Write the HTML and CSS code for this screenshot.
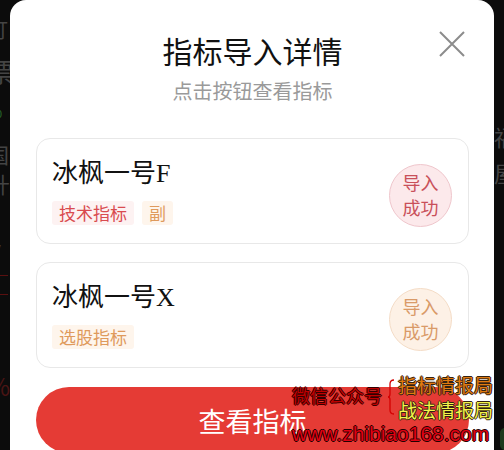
FILE: index.html
```html
<!DOCTYPE html>
<html lang="zh-CN">
<head>
    <meta charset="UTF-8">
    <meta name="viewport" content="width=device-width, initial-scale=1.0">
    <title>指标导入详情</title>
    <link rel="stylesheet" href="styles.css">
</head>
<body>
    <div class="screen">
        <div class="side side-left">
            <span class="ghost g-ding">订</span>
            <span class="ghost g-piao">票</span>
            <span class="ghost g-zero">0</span>
            <span class="ghost g-guo">国</span>
            <span class="ghost g-zhong">卄</span>
            <span class="ghost g-v">V</span>
            <span class="dash dash-1"></span>
            <span class="dash dash-2"></span>
            <span class="ghost g-pct">%</span>
        </div>

        <div class="modal">
            <button class="close" aria-label="关闭">
                <svg width="26" height="26" viewBox="0 0 26 26">
                    <path d="M1 1 L25 25 M25 1 L1 25" stroke="#8c8c8c" stroke-width="2" fill="none"/>
                </svg>
            </button>

            <h1 class="title">指标导入详情</h1>
            <p class="subtitle">点击按钮查看指标</p>

            <div class="list">
                <div class="card">
                    <div class="info">
                        <div class="name">冰枫一号F</div>
                        <div class="tags">
                            <span class="tag tag-red">技术指标</span>
                            <span class="tag tag-orange">副</span>
                        </div>
                    </div>
                    <div class="badge badge-red">导入<br>成功</div>
                </div>

                <div class="card">
                    <div class="info">
                        <div class="name">冰枫一号X</div>
                        <div class="tags">
                            <span class="tag tag-orange">选股指标</span>
                        </div>
                    </div>
                    <div class="badge badge-orange">导入<br>成功</div>
                </div>
            </div>

            <button class="view-btn">查看指标</button>
        </div>

        <div class="side side-right">
            <span class="ghost g-fu">福</span>
            <span class="ghost g-wu">屋</span>
            <span class="blob"></span>
        </div>
    </div>

    <div class="watermark">
        <div class="wm-row">
            <span class="wm-wx">微信公众号</span>
            <svg class="wm-brace" width="8" height="36" viewBox="0 0 8 36">
                <path d="M7 1 Q3 1 3 5 L3 15 Q3 18 1 18 Q3 18 3 21 L3 31 Q3 35 7 35" stroke="#d40000" stroke-width="1.3" fill="none"/>
            </svg>
            <div class="wm-names">
                <span class="wm-orange">指标情报局</span>
                <span class="wm-yellow">战法情报局</span>
            </div>
        </div>
        <div class="wm-url">www.zhibiao168.com</div>
    </div>
</body>
</html>
```

FILE: styles.css
```css
* {
    margin: 0;
    padding: 0;
    box-sizing: border-box;
}

body {
    background: #0c0c0c;
    font-family: "Noto Sans CJK SC", "Noto Sans", sans-serif;
    overflow: hidden;
}

.screen {
    display: flex;
    height: 450px;
    overflow: hidden;
}

/* dimmed page behind the dialog */
.side {
    width: 10px;
    flex: none;
    overflow: hidden;
    display: flex;
    flex-direction: column;
}

.ghost {
    display: block;
    color: #444;
    white-space: nowrap;
}

.side-left .ghost {
    margin-left: -12px;
}

.g-ding { font-size: 20px; line-height: 22px; margin-top: 19px; }
.g-piao { font-size: 26px; line-height: 28px; margin-top: 16px; }
.g-zero { font-size: 11px; line-height: 12px; margin-top: 22px; color: #2a6a2a; margin-left: -4px !important; }
.g-guo { font-size: 21px; line-height: 23px; margin-top: 24px; }
.g-zhong { font-size: 22px; line-height: 24px; margin-top: 5px; }
.g-v { font-size: 22px; line-height: 24px; margin-top: 44px; }
.g-pct { font-size: 24px; line-height: 26px; margin-top: 78px; color: #4a1414; }

.dash {
    display: block;
    height: 1px;
    width: 8px;
    background: #5a1010;
}

.dash-1 { margin-top: 12px; }
.dash-2 { margin-top: 18px; }

.g-fu { font-size: 22px; line-height: 24px; margin-top: 124px; }
.g-wu { font-size: 22px; line-height: 24px; margin-top: 12px; }

.blob {
    display: block;
    width: 10px;
    height: 22px;
    margin-top: 244px;
    margin-left: 6px;
    border-radius: 6px;
    background: #1d3a1d;
}

/* dialog */
.modal {
    position: relative;
    width: 484px;
    flex: none;
    height: 450px;
    background: #fff;
    border-radius: 16px 16px 0 0;
    padding: 32px 25px 0 26px;
    overflow: hidden;
}

.close {
    position: absolute;
    top: 31px;
    right: 29px;
    border: none;
    background: none;
    display: block;
}

.close svg {
    display: block;
}

.title {
    font-size: 30px;
    line-height: 36px;
    font-weight: 400;
    color: #111;
    text-align: center;
}

.subtitle {
    margin-top: 11px;
    font-size: 20px;
    line-height: 24px;
    color: #9a9a9a;
    text-align: center;
}

.list {
    margin-top: 35px;
    display: flex;
    flex-direction: column;
    gap: 18px;
}

.card {
    height: 106px;
    border: 1px solid #e8e8e8;
    border-radius: 14px;
    padding: 0 16px 0 15px;
    display: flex;
    justify-content: space-between;
    align-items: center;
}

.name {
    font-family: "Liberation Serif", "Noto Sans CJK SC", serif;
    font-size: 26px;
    line-height: 31px;
    color: #111;
}

.tags {
    margin-top: 12px;
    display: flex;
    gap: 8px;
}

.tag {
    font-size: 17px;
    line-height: 24px;
    padding: 0 7px;
    border-radius: 3px;
}

.tag-red {
    color: #d94b4f;
    background: #fdf2f2;
}

.tag-orange {
    color: #df9a5c;
    background: #fef5ec;
}

.badge {
    width: 63px;
    height: 63px;
    margin-top: 8px;
    border-radius: 50%;
    display: flex;
    align-items: center;
    justify-content: center;
    text-align: center;
    font-size: 18px;
    line-height: 25px;
}

.badge-red {
    color: #c9505a;
    background: #fce9eb;
    border: 1px solid #efc6cc;
}

.badge-orange {
    color: #d99a68;
    background: #fdf1e6;
    border: 1px solid #f4dcc6;
}

.view-btn {
    margin-top: 19px;
    width: 100%;
    height: 66px;
    border: none;
    border-radius: 33px;
    background: #e53b35;
    color: #fff;
    font-family: "Noto Sans CJK SC", sans-serif;
    font-size: 27px;
    display: block;
}

/* watermark over the screenshot */
.watermark {
    position: absolute;
    left: 292px;
    top: 372px;
    width: 212px;
    font-family: "Noto Sans CJK SC", sans-serif;
}

.wm-row {
    display: flex;
    align-items: center;
}

.wm-wx {
    font-size: 18px;
    line-height: 22px;
    color: #c00000;
    margin-top: -4px;
    text-shadow: 1px 0 #300, -1px 0 #300, 0 1px #300, 0 -1px #300;
}

.wm-brace {
    display: block;
    margin-left: 5px;
    margin-right: 3px;
}

.wm-names {
    display: flex;
    flex-direction: column;
}

.wm-names span {
    font-size: 19px;
    line-height: 25px;
    text-shadow: 1px 0 #321, -1px 0 #321, 0 1px #321, 0 -1px #321;
}

.wm-orange {
    color: #e07a10;
}

.wm-yellow {
    color: #f4f44a;
}

.wm-url {
    font-family: "Liberation Sans", sans-serif;
    font-size: 21px;
    line-height: 24px;
    color: #e00012;
    text-shadow: 1px 0 #200, -1px 0 #200, 0 1px #200, 0 -1px #200;
}
```
